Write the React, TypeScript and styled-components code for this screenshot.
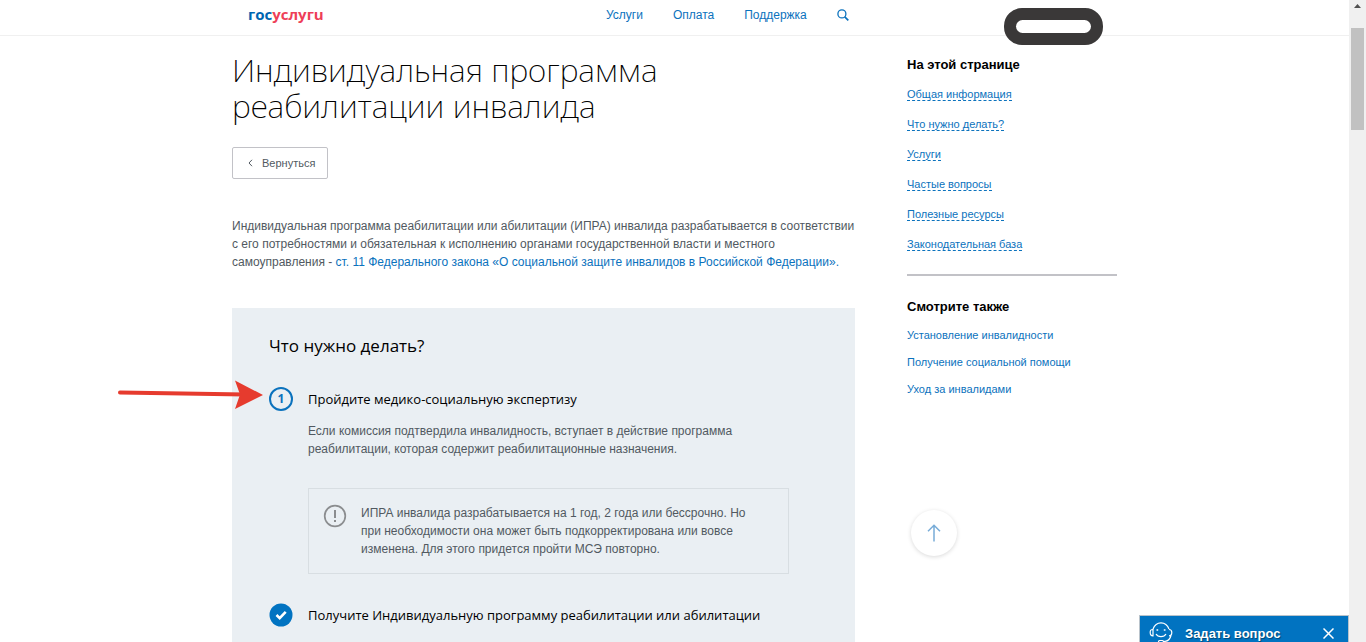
import React from 'react';
import styled, { createGlobalStyle } from 'styled-components';

const sans = '"Liberation Sans", Arial, sans-serif';
const display = '"Open Sans", "Noto Sans", sans-serif';
const blue = '#0b72bd';

const GlobalStyle = createGlobalStyle`
  * { box-sizing: border-box; }
  body { margin: 0; background: #fff; font-family: ${sans}; font-size: 12px; line-height: 18px; color: #515961; }
  h1, h2, h3, p, ul, ol { margin: 0; padding: 0; }
  ul, ol { list-style: none; }
  a { color: ${blue}; text-decoration: none; }
  button { font: inherit; cursor: pointer; }
`;

const Window = styled.div`
  display: flex;
  height: 100vh;
  overflow: hidden;
`;

const Page = styled.div`
  flex: 1;
  min-width: 0;
  overflow: hidden;
`;

const ScrollTrack = styled.div`
  flex: none;
  width: 17px;
  background: #f0f0f0;
  display: flex;
  flex-direction: column;
  align-items: center;
  gap: 20px;
`;

const ScrollUp = styled.svg`
  display: block;
  margin-top: 4px;
  width: 7px;
  height: 4px;
`;

const ScrollThumb = styled.div`
  width: 13px;
  height: 102px;
  background: #c1c1c1;
`;

const Header = styled.header`
  height: 36px;
  border-bottom: 1px solid #f0f0f0;
`;

const HeaderInner = styled.div`
  max-width: 885px;
  height: 30px;
  margin: 0 auto;
  padding-left: 16px;
  display: flex;
  align-items: center;
`;

const Logo = styled.a`
  width: 358px;
  padding-bottom: 2px;
  font: 700 15px/18px ${display};
  color: #0065b1;
`;

const LogoAccent = styled.span`
  color: #ee3f58;
`;

const Nav = styled.nav`
  display: flex;
  align-items: center;
  gap: 30px;
`;

const SearchButton = styled.button`
  display: flex;
  padding: 0;
  border: 0;
  background: none;
  color: ${blue};
`;

const UserMask = styled.div`
  align-self: flex-start;
  flex: none;
  width: 99px;
  height: 37px;
  margin: 8px 14px 0 auto;
  border: 12px solid #3a3838;
  border-radius: 18px;
  background: #3a3838;
  position: relative;
`;

const UserMaskHole = styled.div`
  height: 13px;
  border-radius: 7px;
  background: #fff;
`;

const Columns = styled.div`
  max-width: 885px;
  margin: 0 auto;
  display: flex;
  justify-content: space-between;
  align-items: flex-start;
`;

const Main = styled.main`
  width: 623px;
  padding-top: 16px;
`;

const Title = styled.h1`
  font: 200 32px/36px "Noto Sans", "Open Sans", sans-serif;
  color: #000;
`;

const BackButton = styled.button`
  display: flex;
  align-items: center;
  gap: 8px;
  height: 32px;
  margin-top: 23px;
  padding: 0 12px 0 14px;
  border: 1px solid #c2c2c7;
  border-radius: 2px;
  background: #fff;
  font-size: 11px;
  color: #515961;
`;

const Intro = styled.p`
  margin-top: 38px;
`;

const Panel = styled.section`
  margin-top: 37px;
  padding: 26px 37px 40px;
  background: #eaeff3;
`;

const PanelTitle = styled.h2`
  font: 400 17px/24px ${display};
  color: #000;
`;

const Steps = styled.ol`
  margin-top: 29px;
  display: flex;
  flex-direction: column;
  gap: 29px;
`;

const Step = styled.li`
  position: relative;
  display: flex;
  gap: 15px;
`;

const StepBody = styled.div`
  flex: 1;
`;

const StepNumber = styled.span`
  flex: none;
  width: 24px;
  height: 24px;
  border: 2px solid ${blue};
  border-radius: 50%;
  font: 700 12px/20px ${display};
  text-align: center;
  color: ${blue};
`;

const StepIcon = styled.svg`
  flex: none;
  display: block;
  width: 24px;
  height: 24px;
`;

const StepTitle = styled.h3`
  font: 400 13px/24px ${display};
  color: #000;
`;

const StepText = styled.p`
  margin-top: 11px;
`;

const Note = styled.div`
  display: flex;
  gap: 14px;
  margin-top: 30px;
  margin-right: 29px;
  padding: 15px 14px 15px;
  min-height: 86px;
  border: 1px solid #d8dee2;
`;

const NoteIcon = styled.svg`
  flex: none;
  width: 24px;
  height: 24px;
`;

const Pointer = styled.svg`
  position: absolute;
  left: -152px;
  top: -8px;
  width: 148px;
  height: 32px;
`;

const Aside = styled.aside`
  width: 210px;
  padding-top: 19px;
`;

const AsideTitle = styled.h2`
  font: 700 13px/20px ${sans};
  color: #000;
`;

const AnchorList = styled.ul`
  display: flex;
  flex-direction: column;
  gap: 12px;
  margin-top: 10px;
  padding-bottom: 21px;
  border-bottom: 2px solid #c2c2c7;
  font-size: 11px;
`;

const AnchorLink = styled.a`
  border-bottom: 1px dashed ${blue};
`;

const RelatedList = styled.ul`
  display: flex;
  flex-direction: column;
  gap: 9px;
  margin-top: 9px;
  font-size: 11px;
`;

const Related = styled.section`
  margin-top: 21px;
`;

const ToTop = styled.button`
  display: flex;
  align-items: center;
  justify-content: center;
  width: 46px;
  height: 46px;
  margin: 112px 0 0 4px;
  padding: 0;
  border: 0;
  border-radius: 50%;
  background: #fff;
  box-shadow: 0 1px 4px rgba(0, 0, 0, 0.15);
`;

const Chat = styled.button`
  position: fixed;
  right: 17px;
  bottom: 0;
  display: flex;
  align-items: flex-start;
  width: 210px;
  height: 27px;
  padding: 5px 14px 0 9px;
  border: 1px solid #b9c3cb;
  border-bottom: 0;
  background: #0173c1;
  color: #fff;
  overflow: hidden;
`;

const ChatLabel = styled.span`
  flex: 1;
  margin: 4px 0 0 12px;
  font: 700 13px/18px ${sans};
  text-align: left;
  text-shadow: 1px 1px 1px rgba(0, 0, 0, 0.4);
`;

const ChatClose = styled.svg`
  margin-top: 7px;
`;

const sections = [
  'Общая информация',
  'Что нужно делать?',
  'Услуги',
  'Частые вопросы',
  'Полезные ресурсы',
  'Законодательная база',
];

const related = ['Установление инвалидности', 'Получение социальной помощи', 'Уход за инвалидами'];

export default function App() {
  return (
    <>
      <GlobalStyle />
      <Window>
        <Page>
          <Header>
            <HeaderInner>
              <Logo href="#" aria-label="госуслуги">
                гос<LogoAccent>услугu</LogoAccent>
              </Logo>
              <Nav>
                <a href="#services">Услуги</a>
                <a href="#payment">Оплата</a>
                <a href="#support">Поддержка</a>
                <SearchButton aria-label="Поиск">
                  <svg width="12" height="12" viewBox="0 0 12 12" fill="none" stroke="currentColor">
                    <circle cx="4.9" cy="4.9" r="4" strokeWidth="1.3" />
                    <path d="M7.8 7.8L11.3 11.3" strokeWidth="1.7" />
                  </svg>
                </SearchButton>
              </Nav>
              <UserMask>
                <UserMaskHole />
              </UserMask>
            </HeaderInner>
          </Header>
          <Columns>
            <Main>
              <Title>
                Индивидуальная программа
                <br />
                реабилитации инвалида
              </Title>
              <BackButton>
                <svg width="7" height="8" viewBox="0 0 7 8" fill="none" stroke="#515961">
                  <path d="M5 0.8L2 4L5 7.2" />
                </svg>
                Вернуться
              </BackButton>
              <Intro>
                Индивидуальная программа реабилитации или абилитации (ИПРА) инвалида разрабатывается в соответствии
                <br />с его потребностями и обязательная к исполнению органами государственной власти и местного
                <br />
                самоуправления -{' '}
                <a href="#law">
                  ст. 11 Федерального закона «О социальной защите инвалидов в Российской Федерации».
                </a>
              </Intro>
              <Panel>
                <PanelTitle>Что нужно делать?</PanelTitle>
                <Steps>
                  <Step>
                    <StepNumber>1</StepNumber>
                    <StepBody>
                      <StepTitle>Пройдите медико-социальную экспертизу</StepTitle>
                      <StepText>
                        Если комиссия подтвердила инвалидность, вступает в действие программа
                        <br />
                        реабилитации, которая содержит реабилитационные назначения.
                      </StepText>
                      <Note>
                        <NoteIcon viewBox="0 0 24 24" fill="none" stroke="#8b8d8f">
                          <circle cx="12" cy="12" r="10.3" strokeWidth="1.7" />
                          <path d="M12 6V14M12 16V18" strokeWidth="2" />
                        </NoteIcon>
                        <p>
                          ИПРА инвалида разрабатывается на 1 год, 2 года или бессрочно. Но
                          <br />
                          при необходимости она может быть подкорректирована или вовсе
                          <br />
                          изменена. Для этого придется пройти МСЭ повторно.
                        </p>
                      </Note>
                    </StepBody>
                    <Pointer viewBox="0 0 148 32" aria-hidden="true">
                      <path d="M3 13.5L128 15.5" stroke="#e63b2e" strokeWidth="4" strokeLinecap="round" />
                      <path d="M146 16L118 1.500L123 15.500L118 30Z" fill="#e63b2e" />
                    </Pointer>
                  </Step>
                  <Step>
                    <StepIcon viewBox="0 0 24 24">
                      <circle cx="12" cy="12" r="11.500" fill="#0173c1" />
                      <path d="M7.500 12L10.700 15.200L16.700 8.800" fill="none" stroke="#fff" strokeWidth="2.600" />
                    </StepIcon>
                    <StepBody>
                      <StepTitle>Получите Индивидуальную программу реабилитации или абилитации</StepTitle>
                    </StepBody>
                  </Step>
                </Steps>
              </Panel>
            </Main>
            <Aside>
              <AsideTitle>На этой странице</AsideTitle>
              <AnchorList>
                {sections.map((label) => (
                  <li key={label}>
                    <AnchorLink href="#section">{label}</AnchorLink>
                  </li>
                ))}
              </AnchorList>
              <Related>
                <AsideTitle>Смотрите также</AsideTitle>
                <RelatedList>
                  {related.map((label) => (
                    <li key={label}>
                      <a href="#related">{label}</a>
                    </li>
                  ))}
                </RelatedList>
              </Related>
              <ToTop aria-label="Наверх">
                <svg width="14" height="18" viewBox="0 0 14 18" fill="none" stroke="#78acd8" strokeWidth="1.500">
                  <path d="M7 17.500V1.500M1 7.300L7 1.300L13 7.300" />
                </svg>
              </ToTop>
            </Aside>
          </Columns>
        </Page>
        <ScrollTrack aria-hidden="true">
          <ScrollUp viewBox="0 0 7 4">
            <path d="M0 4L3.500 0L7 4Z" fill="#505050" />
          </ScrollUp>
          <ScrollThumb />
        </ScrollTrack>
      </Window>
      <Chat>
        <svg width="24" height="24" viewBox="0 0 24 24" fill="none" stroke="#fff" strokeWidth="1.200">
          <path d="M4 8C5.500 4 8.500 1.800 12 1.800S18.500 4 20 8" />
          <path d="M4 8.500C1.500 8.500 1.200 9.500 1.200 11.500S1.500 14.800 4 14.800ZM20 8.500C22.500 8.500 22.800 9.500 22.800 11.500S22.500 14.800 20 14.800" />
          <path d="M22 14.500C21 18.500 18 20.500 14.500 20.500" />
          <path d="M7 13C9 16.500 15 16.500 17 13" />
          <path d="M7.500 9H9.200M14.800 9H16.500" strokeWidth="1.600" />
          <rect x="9.500" y="19.500" width="5" height="2" rx="1" />
        </svg>
        <ChatLabel>Задать вопрос</ChatLabel>
        <ChatClose width="11" height="11" viewBox="0 0 11 11" stroke="#fff" strokeWidth="1.500">
          <path d="M0.500 0.500L10.500 10.500M10.500 0.500L0.500 10.500" />
        </ChatClose>
      </Chat>
    </>
  );
}
